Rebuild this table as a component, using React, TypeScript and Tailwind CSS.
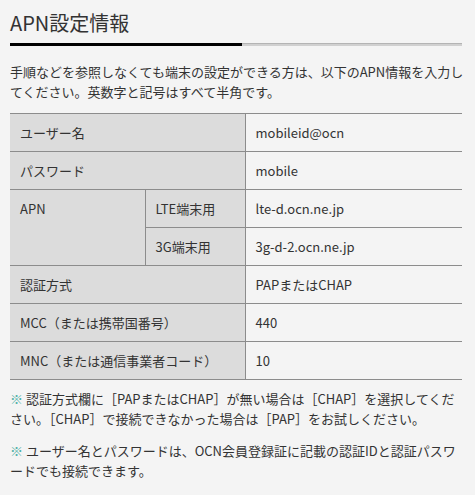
const rows: { label: string; value: string }[] = [
  { label: "認証方式", value: "PAPまたはCHAP" },
  { label: "MCC（または携帯国番号）", value: "440" },
  { label: "MNC（または通信事業者コード）", value: "10" },
];

const cell = "h-[38px] border-b border-[#8c8c8c] px-[10px] align-middle";
const label = `${cell} bg-[#dcdcdc]`;

export default function App() {
  return (
    <div
      className="min-h-screen bg-[#f4f4f4] text-[#333] text-[13px] leading-[20px]"
      style={{ fontFamily: '"Noto Sans CJK JP", "Noto Sans", sans-serif' }}
    >
      <div className="ml-[10px] w-[452px] pt-[8px]">
        <h2 className="text-[20px] leading-[30px] font-normal text-[#333]">APN設定情報</h2>
        <div className="mt-[5px] flex h-[3px]">
          <div className="w-[232px] bg-black" />
          <div className="flex-1 flex flex-col">
            <div className="h-px bg-[#b4b4b4]" />
            <div className="h-[2px] bg-[#d0d0d0]" />
          </div>
        </div>

        <p className="mt-[16px] whitespace-nowrap">
          手順などを参照しなくても端末の設定ができる方は、以下のAPN情報を入力し
          <br />
          てください。英数字と記号はすべて半角です。
        </p>

        <table className="mt-[11px] w-full border-collapse border-t border-[#8c8c8c]">
          <colgroup>
            <col className="w-[135px]" />
            <col className="w-[100px]" />
            <col />
          </colgroup>
          <tbody>
            <tr>
              <th colSpan={2} className={`${label} text-left font-normal border-r`}>ユーザー名</th>
              <td className={cell}>mobileid@ocn</td>
            </tr>
            <tr>
              <th colSpan={2} className={`${label} text-left font-normal border-r`}>パスワード</th>
              <td className={cell}>mobile</td>
            </tr>
            <tr>
              <th rowSpan={2} className={`${cell} bg-[#dcdcdc] text-left font-normal border-r align-top pt-[9px]`}>APN</th>
              <th className={`${label} text-left font-normal border-r`}>LTE端末用</th>
              <td className={cell}>lte-d.ocn.ne.jp</td>
            </tr>
            <tr>
              <th className={`${label} text-left font-normal border-r`}>3G端末用</th>
              <td className={cell}>3g-d-2.ocn.ne.jp</td>
            </tr>
            {rows.map((r) => (
              <tr key={r.label}>
                <th colSpan={2} className={`${label} text-left font-normal border-r`}>{r.label}</th>
                <td className={cell}>{r.value}</td>
              </tr>
            ))}
          </tbody>
        </table>

        <div className="mt-[9px] flex flex-col gap-[12px] whitespace-nowrap">
          <p>
            <span className="text-[#4fb0a6]">※</span>&nbsp;認証方式欄に［PAPまたはCHAP］が無い場合は［CHAP］を選択してくだ
            <br />
            さい。［CHAP］で接続できなかった場合は［PAP］をお試しください。
          </p>
          <p>
            <span className="text-[#4fb0a6]">※</span>&nbsp;ユーザー名とパスワードは、OCN会員登録証に記載の認証IDと認証パスワ
            <br />
            ードでも接続できます。
          </p>
        </div>
      </div>
    </div>
  );
}
